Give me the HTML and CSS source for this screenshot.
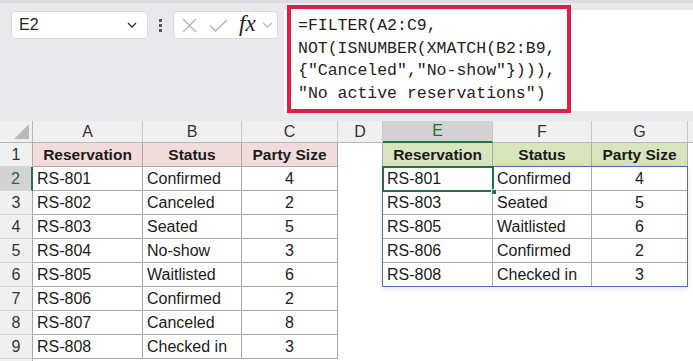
FILE: index.html
```html
<!DOCTYPE html>
<html lang="en">
  <head>
    <meta charset="UTF-8" />
    <title>FILTER reservations</title>
    <link rel="stylesheet" href="styles.css">
  </head>
  <body>
    <div class="toolbar">
      <div class="namebox">
        <span>E2</span>
        <svg width="10" height="6" viewBox="0 0 10 6"><polyline points="1,1 5,5 9,1" fill="none" stroke="#333" stroke-width="1.3"/></svg>
      </div>
      <div class="dots"><i></i><i></i><i></i></div>
      <div class="fxbox">
        <svg width="15" height="15" viewBox="0 0 15 15"><path d="M1 1 L14 14 M14 1 L1 14" stroke="#b4b4b4" stroke-width="1.4"/></svg>
        <svg width="19" height="13" viewBox="0 0 19 13"><polyline points="1,6.5 6.5,12 18,1" fill="none" stroke="#b4b4b4" stroke-width="1.4"/></svg>
        <span class="fx">fx</span>
        <svg width="11" height="6" viewBox="0 0 11 6"><polyline points="1,1 5.5,5 10,1" fill="none" stroke="#b4b4b4" stroke-width="1.2"/></svg>
      </div>
      <div class="formulabar"></div>
      <div class="formula">=FILTER(A2:C9,
NOT(ISNUMBER(XMATCH(B2:B9,
{"Canceled","No-show"}))),
"No active reservations")</div>
    </div>

    <div class="sheet">
      <div class="ch corner"><span class="tri"></span></div>
      <div class="ch">A</div>
      <div class="ch">B</div>
      <div class="ch">C</div>
      <div class="ch">D</div>
      <div class="ch active">E</div>
      <div class="ch">F</div>
      <div class="ch">G</div>
      <div class="ch last"></div>

      <div class="rh">1</div>
      <div class="c t hp">Reservation</div>
      <div class="c t hp">Status</div>
      <div class="c t hp">Party Size</div>
      <div class="c gap"></div>
      <div class="c t hg">Reservation</div>
      <div class="c t hg">Status</div>
      <div class="c t hg">Party Size</div>
      <div class="c"></div>

      <div class="rh active">2</div>
      <div class="c t">RS-801</div>
      <div class="c t">Confirmed</div>
      <div class="c t num">4</div>
      <div class="c gap"></div>
      <div class="c t">RS-801</div>
      <div class="c t">Confirmed</div>
      <div class="c t num">4</div>
      <div class="c"></div>

      <div class="rh">3</div>
      <div class="c t">RS-802</div>
      <div class="c t">Canceled</div>
      <div class="c t num">2</div>
      <div class="c gap"></div>
      <div class="c t">RS-803</div>
      <div class="c t">Seated</div>
      <div class="c t num">5</div>
      <div class="c"></div>

      <div class="rh">4</div>
      <div class="c t">RS-803</div>
      <div class="c t">Seated</div>
      <div class="c t num">5</div>
      <div class="c gap"></div>
      <div class="c t">RS-805</div>
      <div class="c t">Waitlisted</div>
      <div class="c t num">6</div>
      <div class="c"></div>

      <div class="rh">5</div>
      <div class="c t">RS-804</div>
      <div class="c t">No-show</div>
      <div class="c t num">3</div>
      <div class="c gap"></div>
      <div class="c t">RS-806</div>
      <div class="c t">Confirmed</div>
      <div class="c t num">2</div>
      <div class="c"></div>

      <div class="rh">6</div>
      <div class="c t">RS-805</div>
      <div class="c t">Waitlisted</div>
      <div class="c t num">6</div>
      <div class="c gap"></div>
      <div class="c t">RS-808</div>
      <div class="c t">Checked in</div>
      <div class="c t num">3</div>
      <div class="c"></div>

      <div class="rh">7</div>
      <div class="c t">RS-806</div>
      <div class="c t">Confirmed</div>
      <div class="c t num">2</div>
      <div class="c"></div><div class="c"></div><div class="c"></div><div class="c"></div><div class="c"></div>

      <div class="rh">8</div>
      <div class="c t">RS-807</div>
      <div class="c t">Canceled</div>
      <div class="c t num">8</div>
      <div class="c"></div><div class="c"></div><div class="c"></div><div class="c"></div><div class="c"></div>

      <div class="rh">9</div>
      <div class="c t">RS-808</div>
      <div class="c t">Checked in</div>
      <div class="c t num">3</div>
      <div class="c"></div><div class="c"></div><div class="c"></div><div class="c"></div><div class="c"></div>

      <div class="rh"></div>

      <div class="spill"></div>
      <div class="selection"><span class="handle"></span></div>
    </div>
  </body>
</html>
```

FILE: styles.css
```css
* {
  box-sizing: border-box;
}
body {
  margin: 0;
  width: 693px;
  height: 361px;
  overflow: hidden;
  background: #fff;
  font-family: 'Liberation Sans', Arial, sans-serif;
  color: #1b1b1b;
}

/* top area: name box, buttons, formula bar */
.toolbar {
  position: relative;
  display: flex;
  align-items: flex-start;
  height: 121px;
  background: #e9e9ed;
  border-top: 3px solid #dcdce0;
}
.namebox {
  display: flex;
  align-items: center;
  justify-content: space-between;
  margin: 8px 0 0 11px;
  width: 137px;
  height: 28px;
  padding: 0 10px 0 7px;
  background: #fff;
  border: 1px solid #dadade;
  border-radius: 4px;
  font-size: 16px;
  color: #222;
}
.dots {
  display: flex;
  flex-direction: column;
  gap: 2px;
  margin: 16px 0 0 11px;
}
.dots i {
  display: block;
  width: 3px;
  height: 3px;
  background: #555;
}
.fxbox {
  display: flex;
  align-items: center;
  margin: 8px 0 0 11px;
  width: 105px;
  height: 28px;
  padding: 0 0 0 8px;
  background: #fff;
  border: 1px solid #dadade;
  border-radius: 4px;
}
.fxbox svg:nth-child(2) {
  margin-left: 12px;
}
.fx {
  margin-left: 11px;
  font-family: 'Liberation Serif', 'Times New Roman', serif;
  font-style: italic;
  font-size: 23px;
  line-height: 1;
  color: #222;
  margin-top: -4px;
}
.fxbox svg:last-child {
  margin-left: 6px;
}
.formulabar {
  flex: 1;
  margin: 7px 0 0 6px;
  height: 101px;
  background: #fff;
}
.formula {
  position: absolute;
  left: 287px;
  top: 2px;
  width: 284px;
  height: 108px;
  border: 4px solid #e31d4b;
  background: #fff;
  padding: 6px 0 0 7px;
  font-family: 'Liberation Mono', 'Courier New', monospace;
  font-size: 16.5px;
  line-height: 22.7px;
  white-space: pre;
  color: #222;
}

/* sheet grid */
.sheet {
  position: relative;
  display: grid;
  grid-template-columns: 33px 110px 99px 96px 45px 110px 99px 96px 5px;
  grid-template-rows: 22px repeat(10, 24px);
  height: 240px;
  font-size: 16px;
}
.ch {
  display: flex;
  align-items: center;
  justify-content: center;
  background: #f0f0f0;
  border-right: 1px solid #c9c9c9;
  border-bottom: 1px solid #b7b7b7;
  font-size: 16px;
  color: #333;
}
.ch.active {
  background: #d3d3d3;
  color: #1e6b41;
  border-bottom: 2px solid #217346;
}
.ch.last {
  border-right: none;
}
.corner {
  align-items: flex-end;
  justify-content: flex-end;
  padding: 0 3px 3px 0;
  border-right-color: #b7b7b7;
}
.tri {
  width: 15px;
  height: 15px;
  background: #b9b9b9;
  clip-path: polygon(100% 0, 100% 100%, 0 100%);
}
.rh {
  display: flex;
  align-items: center;
  justify-content: center;
  background: #f0f0f0;
  border-right: 1px solid #a9a9a9;
  border-bottom: 1px solid #d6d6d6;
  font-size: 16px;
  color: #333;
}
.rh.active {
  background: #d3d3d3;
  color: #1e6b41;
  border-right: 2px solid #217346;
}
.c {
  display: flex;
  align-items: center;
  padding: 1px 4px 0 4px;
  white-space: nowrap;
}
.t {
  border-right: 1px solid #a9a9a9;
  border-bottom: 1px solid #a9a9a9;
}
.gap {
  border-right: 1px solid #a9a9a9;
}
.num {
  justify-content: center;
}
.hp,
.hg {
  justify-content: center;
  font-weight: bold;
  font-size: 15.5px;
}
.hp {
  background: #f2dcdb;
}
.hg {
  background: #d8e4bc;
}

/* overlays: spill range and active cell */
.spill {
  position: absolute;
  left: 382px;
  top: 45px;
  width: 306px;
  height: 121px;
  border: 1px solid #4472c4;
  box-shadow: 0 2px 6px rgba(0, 0, 0, 0.1);
  pointer-events: none;
}
.selection {
  position: absolute;
  left: 382px;
  top: 45px;
  width: 112px;
  height: 26px;
  border: 2px solid #217346;
}
.handle {
  position: absolute;
  right: -5px;
  bottom: -5px;
  width: 6px;
  height: 6px;
  background: #217346;
  border: 1px solid #fff;
}
```
